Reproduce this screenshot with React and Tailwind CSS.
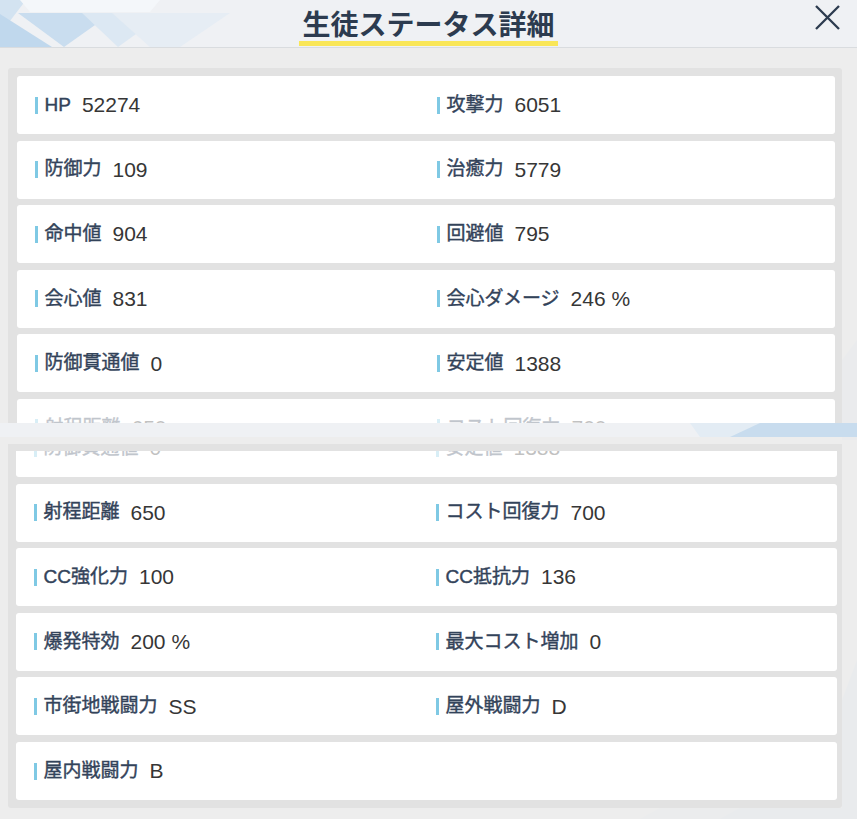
import React from "react";

const topRows = [
  [["HP", "52274"], ["攻撃力", "6051"]],
  [["防御力", "109"], ["治癒力", "5779"]],
  [["命中値", "904"], ["回避値", "795"]],
  [["会心値", "831"], ["会心ダメージ", "246 %"]],
  [["防御貫通値", "0"], ["安定値", "1388"]],
  [["射程距離", "650"], ["コスト回復力", "700"]],
];

const bottomRows = [
  [["防御貫通値", "0"], ["安定値", "1388"]],
  [["射程距離", "650"], ["コスト回復力", "700"]],
  [["CC強化力", "100"], ["CC抵抗力", "136"]],
  [["爆発特効", "200 %"], ["最大コスト増加", "0"]],
  [["市街地戦闘力", "SS"], ["屋外戦闘力", "D"]],
  [["屋内戦闘力", "B"], null],
];

function Stat({ item, faded }) {
  if (!item) return <div />;
  const [label, value] = item;
  return (
    <div className={`flex items-center ${faded ? "opacity-30" : ""}`}>
      <span className="w-[2.5px] h-[17px] bg-[#7fc9e4]" />
      <span className="ml-[7px] text-[19px] text-[#33435a] [-webkit-text-stroke:0.4px_#33435a] [font-family:'Liberation_Sans','Noto_Sans_CJK_JP',sans-serif]">
        {label}
      </span>
      <span className="ml-[11px] text-[21px] text-[#363636] [font-family:'Liberation_Sans',sans-serif]">
        {value}
      </span>
    </div>
  );
}

function Row({ row, faded }) {
  return (
    <div className="h-[58px] shrink-0 rounded-[3px] bg-white pl-[18px] grid grid-cols-[402px_1fr] items-center">
      <Stat item={row[0]} faded={faded} />
      <Stat item={row[1]} faded={faded} />
    </div>
  );
}

function Backdrop() {
  return (
    <svg
      className="absolute inset-0"
      width="857"
      height="819"
      viewBox="0 0 857 819"
    >
      <rect width="857" height="819" fill="#eff1f4" />
      {/* header corner facets */}
      <polygon points="0,0 26,0 0,34" fill="#d3e3f1" />
      <polygon points="0,14 52,47 0,47" fill="#c0d8ed" />
      <polygon points="18,13 112,13 64,47" fill="#c9ddef" />
      <polygon points="82,13 165,13 118,47" fill="#dce8f3" />
      <polygon points="20,0 160,0 150,12 30,12" fill="#f4f7fa" />
      <polygon points="112,13 230,13 180,47 150,47" fill="#e6edf4" />
      {/* right-side facets */}
      <polygon points="842,360 857,340 857,440 842,440" fill="#cfe1f0" />
      <polygon points="690,423 857,423 857,437 700,437" fill="#e3ecf4" />
      <polygon points="760,423 857,423 857,437 730,437" fill="#c8dcee" />
      <polygon points="842,700 857,660 857,819 842,819" fill="#cde0ef" />
      <polygon points="660,808 857,808 857,819 640,819" fill="#dae7f2" />
      <polygon points="740,808 857,808 857,819 720,819" fill="#c6dbee" />
    </svg>
  );
}

export default function App() {
  return (
    <div className="relative w-[857px] h-[819px] overflow-hidden [font-family:'Liberation_Sans','Noto_Sans_CJK_JP',sans-serif]">
      <Backdrop />
      <div className="relative flex flex-col h-full">
        <header className="relative h-[48px] shrink-0 border-b border-[#d9dcdf] flex items-end justify-center">
          <h1 className="mb-[1px] px-[3px] border-b-[5px] border-[#f9e658] text-[28px] leading-[36px] font-bold text-[#2c3b4f] [font-family:'Noto_Sans_CJK_JP',sans-serif]">
            生徒ステータス詳細
          </h1>
          <button className="absolute right-[16px] top-[4px] w-[27px] h-[27px]" aria-label="閉じる">
            <svg viewBox="0 0 27 27" width="27" height="27">
              <path d="M2 2 L25 25 M25 2 L2 25" stroke="#2c3b4f" strokeWidth="2.3" />
            </svg>
          </button>
        </header>

        <section className="h-[375px] shrink-0 bg-[#ececec]/90 pt-[20px] pl-[8px] pr-[15px]">
          <div className="h-full overflow-hidden bg-[#e2e2e2] rounded-t-[3px] pt-[8px] pl-[9px] pr-[7px] flex flex-col gap-[6.6px]">
            {topRows.map((r, i) => (
              <Row key={i} row={r} faded={i === topRows.length - 1} />
            ))}
          </div>
        </section>

        <div className="h-[14px] shrink-0" />

        <section className="flex-1 bg-[#ececec]/90 pt-[7px] pl-[8px] pr-[15px]">
          <div className="h-[364px] bg-[#e2e2e2] rounded-b-[3px] pt-[7px] pb-[8px] pl-[8px] pr-[5px] flex flex-col">
            <div className="flex-1 min-h-0 overflow-hidden flex flex-col justify-end gap-[6.6px]">
              {bottomRows.map((r, i) => (
                <Row key={i} row={r} faded={i === 0} />
              ))}
            </div>
          </div>
        </section>
      </div>
    </div>
  );
}
